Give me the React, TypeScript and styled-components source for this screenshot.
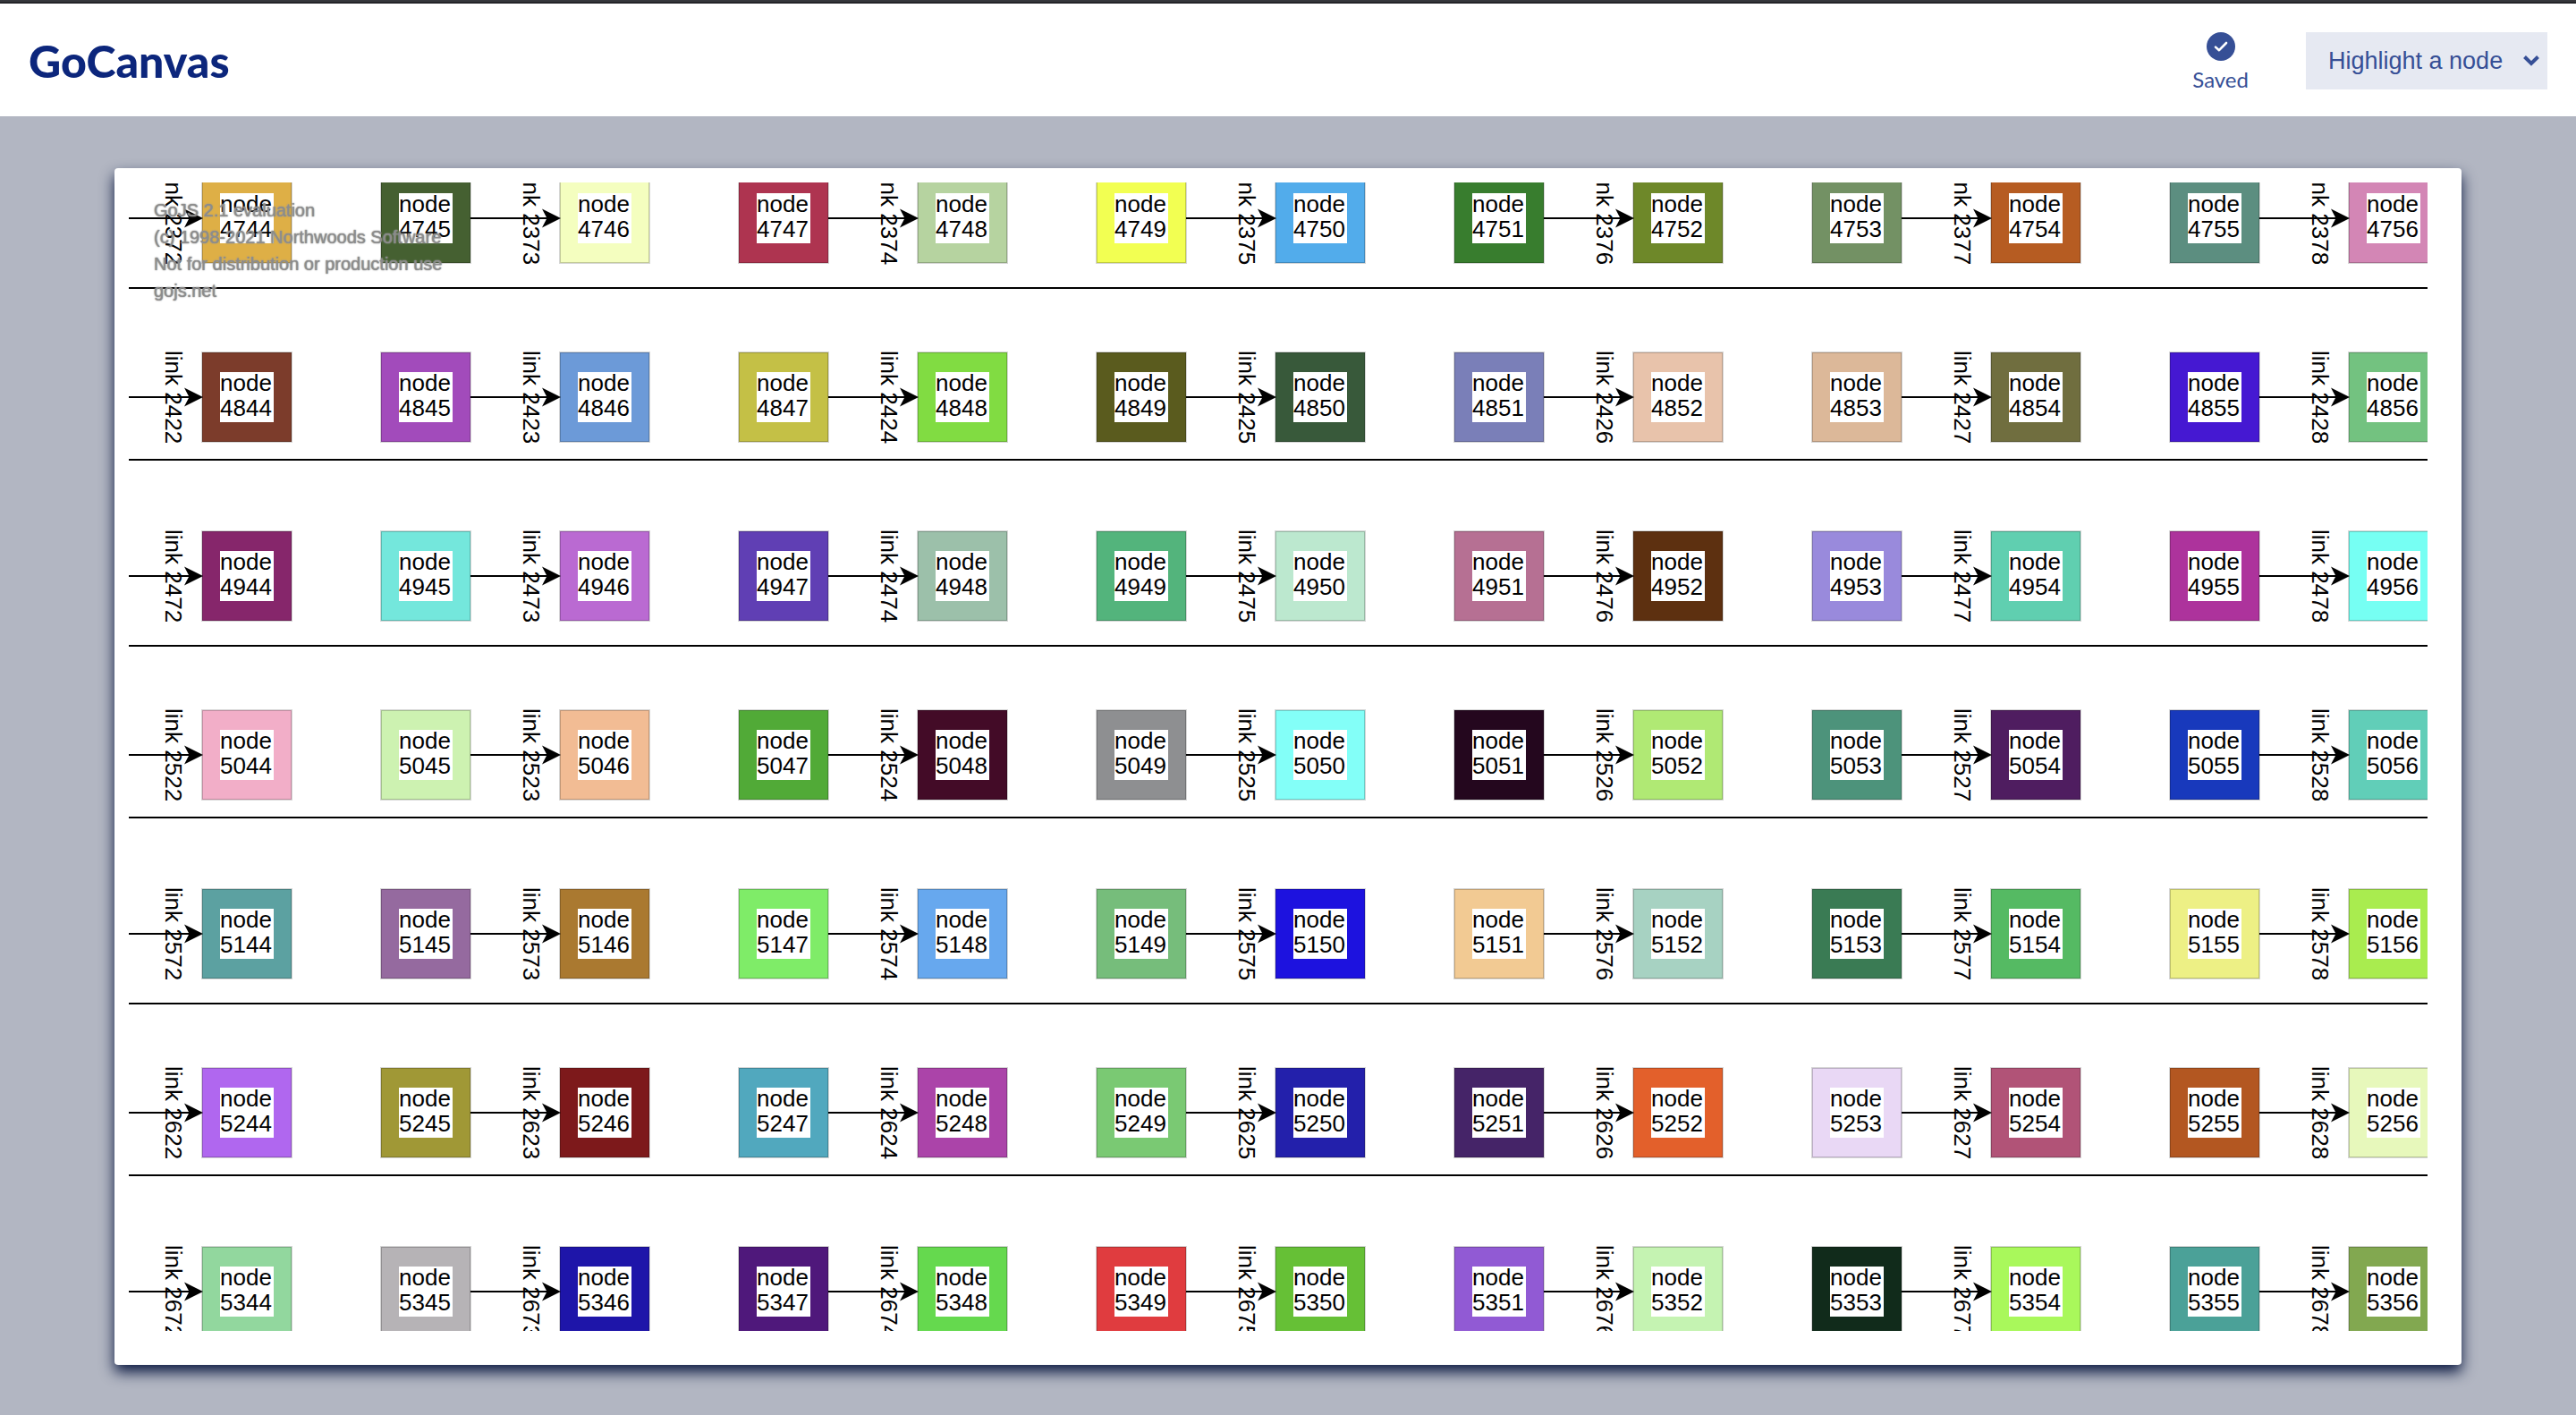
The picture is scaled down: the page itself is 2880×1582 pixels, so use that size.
import React from 'react';
import styled, { createGlobalStyle } from 'styled-components';

const GlobalStyle = createGlobalStyle`
  *, *::before, *::after { box-sizing: border-box; }
  body {
    margin: 0;
    background: #b2b6c2;
    font-family: 'Liberation Sans', Arial, sans-serif;
  }
`;

const Page = styled.div`
  display: flex;
  flex-direction: column;
  min-height: 100vh;
`;

const Header = styled.header`
  display: flex;
  align-items: center;
  justify-content: space-between;
  height: 130px;
  padding: 4px 32px 0;
  border-top: 2px solid #36373c;
  box-shadow: inset 0 2px 0 #232428;
  background-color: #fff;
`;

const Logo = styled.h1`
  margin: 0;
  color: #0c267c;
  font-family: Lato, sans-serif;
  font-size: 50px;
  font-weight: 900;
  line-height: 56px;
`;

const Actions = styled.div`
  display: flex;
  align-items: center;
  gap: 64px;
`;

const SaveStatus = styled.div`
  display: flex;
  flex-direction: column;
  align-items: center;
  gap: 7px;
  padding-top: 3px;
  color: #364f96;
  font-family: Lato, sans-serif;
  font-size: 24px;
  line-height: 28px;
`;

const SelectBox = styled.div`
  display: grid;
  align-items: center;
  width: 270px;
  height: 64px;
  background: #e6e9f2;
  color: #364f96;

  > * {
    grid-area: 1 / 1;
  }
`;

const NodeSelect = styled.select`
  width: 100%;
  height: 100%;
  padding: 0 40px 0 25px;
  border: 0;
  border-radius: 0;
  appearance: none;
  background: transparent;
  color: inherit;
  font-family: inherit;
  font-size: 27px;
`;

const Chevron = styled.svg`
  justify-self: end;
  margin-right: 9px;
  pointer-events: none;
`;

const Main = styled.main`
  display: flex;
  flex: 1;
  padding: 58px 128px 56px;
`;

const Card = styled.section`
  display: flex;
  flex: 1;
  padding: 16px 38px 38px 16px;
  border-radius: 4px;
  background: #fff;
  box-shadow: 0 8px 16px #0c1a42;
`;

const Diagram = styled.div`
  position: relative;
  flex: 1;
  overflow: hidden;
  color: #000;
  font-size: 26px;
  line-height: 28px;
`;

const LaneLine = styled.div`
  position: absolute;
  left: 0;
  right: 0;
  height: 2px;
  background: #000;
`;

const NodeBox = styled.div<{ $fill: string }>`
  position: absolute;
  display: flex;
  align-items: center;
  justify-content: center;
  width: 100px;
  height: 100px;
  background: ${({ $fill }) => $fill};
  box-shadow: 0 0 0 1px rgba(0, 0, 0, 0.16), inset 0 0 0 1px rgba(0, 0, 0, 0.2);
`;

const NodeLabel = styled.div`
  width: 60px;
  height: 56px;
  background: #fff;
`;

const NodeText = styled.p`
  margin: -2px 0 0;
`;

const Link = styled.div`
  position: absolute;
  width: 101px;
  height: 104px;
`;

const LinkArrow = styled.svg`
  position: absolute;
  inset: 0;
`;

const LinkLabel = styled.span`
  position: absolute;
  top: 0;
  right: 19px;
  height: 104px;
  writing-mode: vertical-rl;
  white-space: nowrap;
  text-align: center;
`;

const Watermark = styled.p`
  position: absolute;
  top: 16px;
  left: 28px;
  margin: 0;
  color: rgba(140, 140, 140, 0.9);
  font-size: 20px;
  line-height: 30px;
  white-space: pre-line;
  text-shadow: 0 0 1px #8c8c8c, 0 0 2px #999;
`;

const SPACING = 200;
const FIRST_X = 82;
const FIRST_Y = -10;
const FIRST_NODE = 4744;
const FIRST_LINK = 2372;

const laneLines = [117, 309, 517, 709, 917, 1109];

const nodeColors = [
  ['#deaf46', '#456031', '#f4febf', '#ae3450', '#b6d3a0', '#f2ff52', '#52aceb', '#387d2e', '#6e8829', '#739164', '#b65c22', '#5c8e80', '#d386b5'],
  ['#7c3c2b', '#a24bbb', '#6c9ad8', '#c4c046', '#81dc42', '#5a5b1e', '#38593a', '#7a7fb8', '#e8c3ab', '#dcb899', '#706e3f', '#4518d2', '#73c280'],
  ['#86266b', '#74e7dc', '#ba6ad2', '#603fb4', '#9cc0aa', '#53b47c', '#bce8cf', '#b67093', '#5d3010', '#998adc', '#60cfb0', '#ad339c', '#76fff3'],
  ['#f2aec8', '#cdf2b1', '#f2bc94', '#51aa37', '#430b27', '#8e8f91', '#83fff8', '#24071e', '#b0e974', '#4d937b', '#4f1d60', '#1839bc', '#61ceb8'],
  ['#5ca1a1', '#956a9f', '#aa7930', '#7fec68', '#67a8ee', '#76bd7b', '#1d12df', '#f2ca93', '#a7d2c2', '#3a7b54', '#55ba63', '#edf085', '#a9ec4f'],
  ['#b067ef', '#a09836', '#7d191b', '#51a8be', '#ab44a9', '#7ac973', '#2320ab', '#452468', '#e3602b', '#e9d8f5', '#b15377', '#b35721', '#e7f8bb'],
  ['#92d79e', '#b6b3b6', '#1e15a9', '#4f187b', '#65d94e', '#e03c3f', '#66c036', '#915ad4', '#c5f3b2', '#112b1b', '#a9f85b', '#4ba198', '#82a850'],
];

interface PlacedProps {
  x: number;
  y: number;
}

function DiagramNode({ x, y, id, fill }: PlacedProps & { id: number; fill: string }) {
  return (
    <NodeBox $fill={fill} style={{ left: x, top: y }}>
      <NodeLabel>
        <NodeText>
          node
          <br />
          {id}
        </NodeText>
      </NodeLabel>
    </NodeBox>
  );
}

function DiagramLink({ x, y, id }: PlacedProps & { id: number }) {
  return (
    <Link style={{ left: x - 100, top: y - 2 }}>
      <LinkArrow width="101" height="104" viewBox="0 0 101 104" aria-hidden="true">
        <path d="M0 52H90" stroke="#000" strokeWidth="2" />
        <path d="M101 52L80 41.5L85.5 52L80 62.5Z" />
      </LinkArrow>
      <LinkLabel>link {id}</LinkLabel>
    </Link>
  );
}

export default function App() {
  return (
    <Page>
      <GlobalStyle />
      <Header>
        <Logo>GoCanvas</Logo>
        <Actions>
          <SaveStatus role="status">
            <svg width="32" height="32" viewBox="0 0 32 32" aria-hidden="true">
              <circle cx="16" cy="16" r="16" fill="currentColor" />
              <path
                d="M10 16.6L14 20.2L22 12"
                fill="none"
                stroke="#fff"
                strokeWidth="2.6"
                strokeLinecap="round"
                strokeLinejoin="round"
              />
            </svg>
            <span>Saved</span>
          </SaveStatus>
          <SelectBox>
            <NodeSelect aria-label="Highlight a node" defaultValue="">
              <option value="">Highlight a node</option>
            </NodeSelect>
            <Chevron width="18" height="12" viewBox="0 0 18 12" aria-hidden="true">
              <path d="M1.5 1.5L9 9L16.5 1.5" fill="none" stroke="currentColor" strokeWidth="4" />
            </Chevron>
          </SelectBox>
        </Actions>
      </Header>
      <Main>
        <Card>
          <Diagram>
            {laneLines.map((top) => (
              <LaneLine key={top} style={{ top }} />
            ))}
            {nodeColors.map((row, r) =>
              row.map((fill, c) => (
                <DiagramNode
                  key={c}
                  x={FIRST_X + c * SPACING}
                  y={FIRST_Y + r * SPACING}
                  id={FIRST_NODE + r * 100 + c}
                  fill={fill}
                />
              )),
            )}
            {nodeColors.map((row, r) =>
              row
                .filter((_, c) => c % 2 === 0)
                .map((_, i) => (
                  <DiagramLink
                    key={i}
                    x={FIRST_X + i * 2 * SPACING}
                    y={FIRST_Y + r * SPACING}
                    id={FIRST_LINK + r * 50 + i}
                  />
                )),
            )}
            <Watermark>
              {'GoJS 2.1 evaluation\n(c) 1998-2021 Northwoods Software\nNot for distribution or production use\ngojs.net'}
            </Watermark>
          </Diagram>
        </Card>
      </Main>
    </Page>
  );
}
